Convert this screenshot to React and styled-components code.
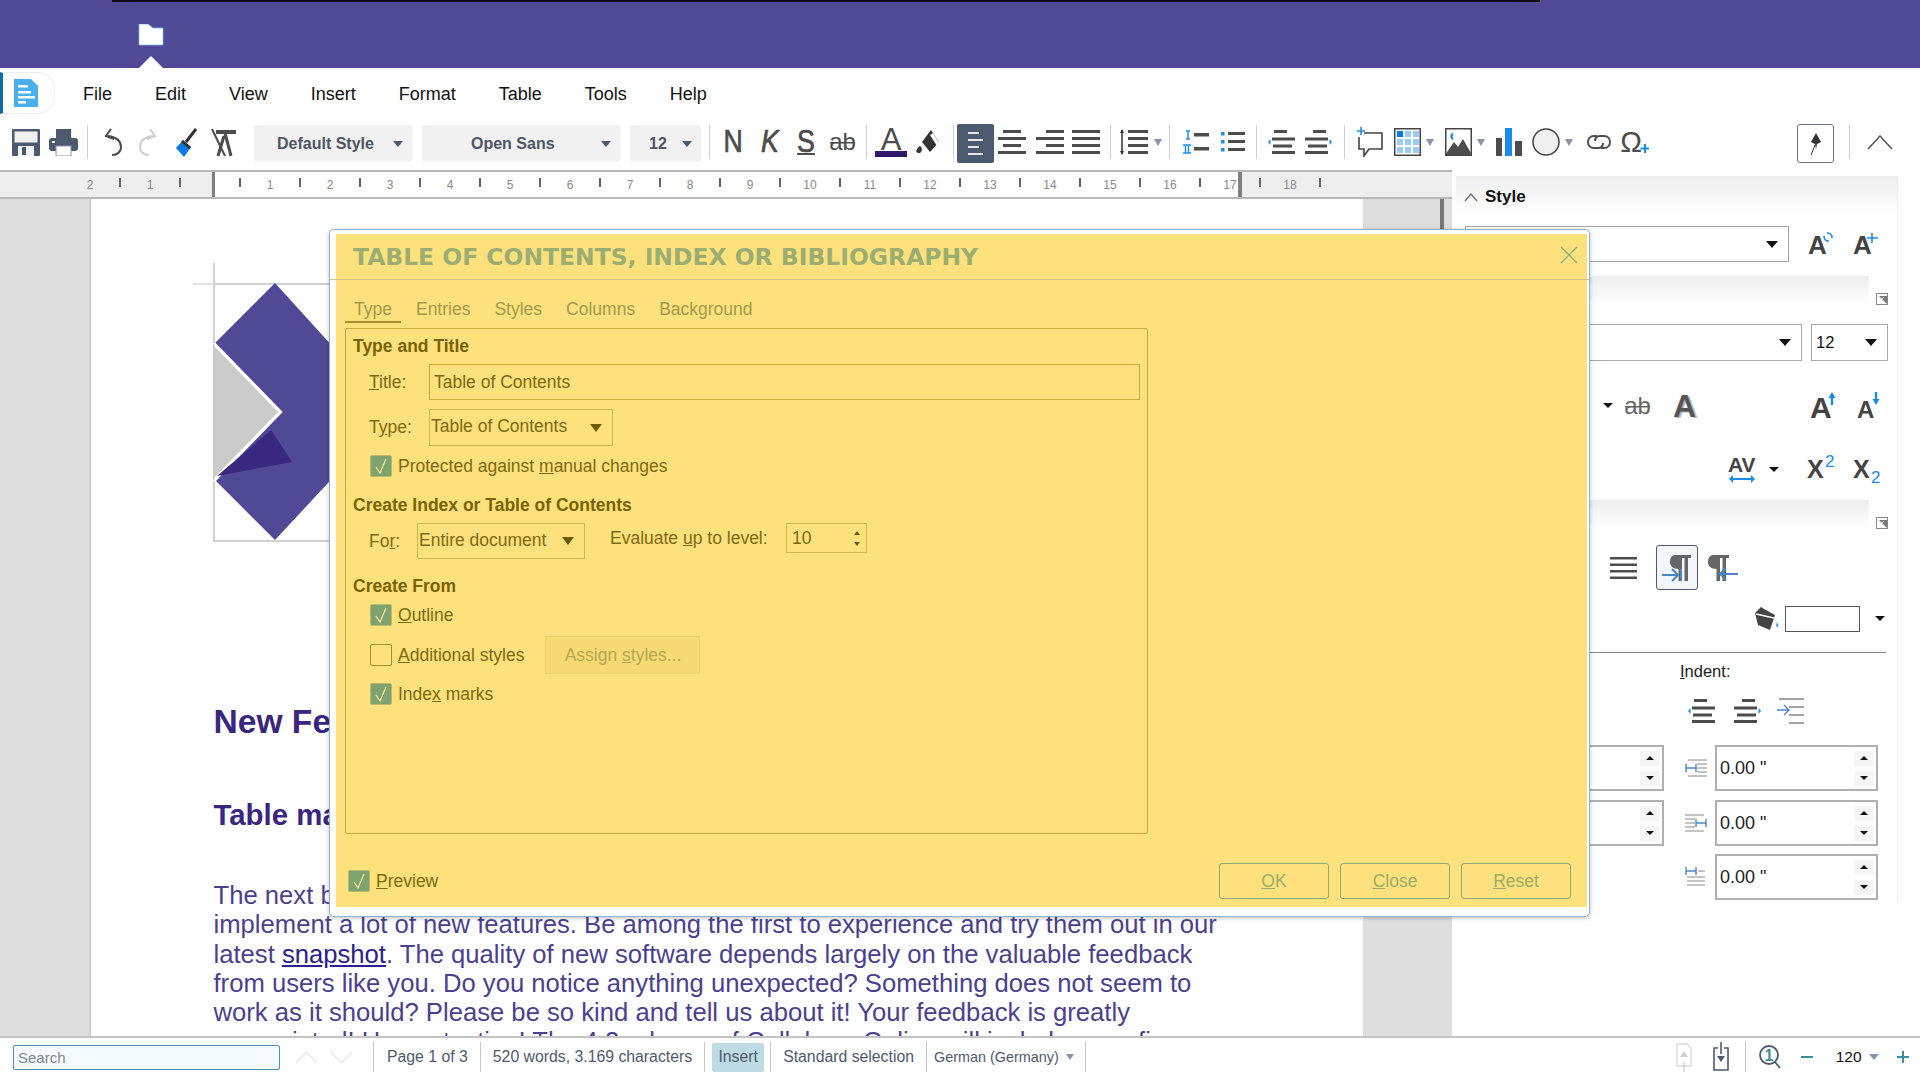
import React from "react";
import styled, { createGlobalStyle } from "styled-components";

const GlobalStyle = createGlobalStyle`
  html, body {
    margin: 0;
    padding: 0;
    background: #fff;
    overflow: hidden;
    font-family: "Liberation Sans", Arial, sans-serif;
  }
  * { box-sizing: border-box; }
`;

const DARK = "#4c4c4c";
const SLATE = "#4c5a70";
const BLUE = "#1b8be8";
const YELLOW_TEXT = "#7d6a10";

// --- page frame ---
const Shell = styled.div`
  width: 1920px;
  height: 1080px;
  display: flex;
  flex-direction: column;
  overflow: hidden;
`;

const TopBar = styled.header`
  height: 68px;
  background: #504a96;
  flex: none;
`;

const TopLine = styled.div`
  margin-left: 112px;
  width: 1428px;
  height: 2px;
  background: #111;
`;

const FolderTab = styled.div`
  margin-left: 138px;
  width: 26px;
  display: flex;
  flex-direction: column;
  padding-top: 22px;
`;

const Notch = styled.div`
  margin-top: 10px;
  width: 0;
  height: 0;
  border-left: 13px solid transparent;
  border-right: 13px solid transparent;
  border-bottom: 13px solid #fff;
`;

const MenuBar = styled.nav`
  height: 46px;
  flex: none;
  display: flex;
  align-items: flex-end;
`;

const DocTab = styled.div`
  width: 55px;
  height: 42px;
  border-left: 3px solid #0b6da8;
  border-top: 1px solid #eee;
  border-right: 1px solid #eee;
  border-bottom: 1px solid #eee;
  border-radius: 0 18px 18px 0;
  display: flex;
  align-items: center;
  padding-left: 11px;
`;

const MenuList = styled.div`
  display: flex;
  gap: 43px;
  margin-left: 28px;
  height: 46px;
  padding-top: 6px;
  align-items: center;
  font-size: 18px;
  color: #111;
`;

const Toolbar = styled.div`
  height: 56px;
  flex: none;
  display: flex;
  align-items: center;
  padding-left: 12px;
`;

const ToolSep = styled.span`
  flex: none;
  width: 1px;
  height: 34px;
  background: #cfcfcf;
  margin-left: ${(p) => p.$ml}px;
`;

const ComboTool = styled.div`
  flex: none;
  width: ${(p) => p.$w}px;
  height: 37px;
  margin-left: ${(p) => p.$ml}px;
  margin-top: 3px;
  background: #f1f1f1;
  border-radius: 3px;
  display: flex;
  align-items: center;
  justify-content: space-between;
  padding: 0 ${(p) => p.$pr}px 0 ${(p) => p.$pl}px;
  font-size: 16px;
  font-weight: 700;
  color: #4e5566;
`;

const Caret = styled.span`
  flex: none;
  display: inline-block;
  width: 0;
  height: 0;
  margin-left: ${(p) => p.$ml || 0}px;
  border-left: ${(p) => p.$s}px solid transparent;
  border-right: ${(p) => p.$s}px solid transparent;
  border-top: ${(p) => (p.$up ? 0 : p.$h || p.$s)}px solid ${(p) => p.$c};
  border-bottom: ${(p) => (p.$up ? p.$h || p.$s : 0)}px solid ${(p) => p.$c};
`;

const ActiveTool = styled.div`
  flex: none;
  width: 37px;
  height: 39px;
  margin-left: ${(p) => p.$ml}px;
  margin-top: 3px;
  background: ${SLATE};
  border-radius: 2px;
  display: flex;
  align-items: center;
  justify-content: center;
`;

const PinTool = styled.div`
  flex: none;
  width: 37px;
  height: 39px;
  margin-left: ${(p) => p.$ml}px;
  margin-top: 3px;
  border: 1px solid #6c7482;
  border-radius: 3px;
  display: flex;
  align-items: center;
  justify-content: center;
`;

const FormatLetter = styled.span`
  flex: none;
  width: ${(p) => p.$w}px;
  margin-left: ${(p) => p.$ml}px;
  height: 30px;
  line-height: 30px;
  text-align: center;
  font-size: 31px;
  font-style: ${(p) => (p.$italic ? "italic" : "normal")};
  text-decoration: ${(p) => (p.$under ? "underline" : "none")};
  text-decoration-thickness: 2px;
  text-underline-offset: 1px;
  color: ${DARK};
  -webkit-text-stroke: 0.7px ${DARK};
  transform: scaleX(0.86);
  overflow: visible;
`;

const IconSvg = styled.svg`
  display: block;
  flex: none;
  margin: ${(p) => -p.$b}px ${(p) => -p.$b}px ${(p) => -p.$b}px ${(p) => (p.$ml || 0) - p.$b}px;
`;

const GlyphText = styled.text`
  font-family: "Liberation Sans", Arial, sans-serif;
`;

// bleed leaves room round the drawing so a glyph in it isn't clipped by the svg box
const Icon = ({ w, h, ml, bleed = 0, children }) => (
  <IconSvg
    $ml={ml}
    $b={bleed}
    width={w + bleed * 2}
    height={h + bleed * 2}
    viewBox={`${-bleed} ${-bleed} ${w + bleed * 2} ${h + bleed * 2}`}
  >
    {children}
  </IconSvg>
);

// --- body ---
const Body = styled.div`
  flex: 1;
  display: flex;
  min-height: 0;
`;

const Workspace = styled.main`
  width: 1452px;
  flex: none;
  display: flex;
  flex-direction: column;
`;

const Ruler = styled.div`
  height: 29px;
  flex: none;
  width: 1452px;
  border-top: 2px solid #b8b8b8;
  border-bottom: 2px solid #b8b8b8;
  background: linear-gradient(
    to right,
    #eee 212px,
    #808080 212px,
    #808080 215px,
    #fff 215px,
    #fff 1238px,
    #808080 1238px,
    #808080 1242px,
    #eee 1242px
  );
  display: flex;
  align-items: center;
  padding-left: 75px;
`;

const RulerCell = styled.span`
  width: 30px;
  flex: none;
  display: flex;
  justify-content: center;
  font-size: 12px;
  color: #8a8a8a;
`;

const RulerTick = styled.span`
  width: 1.5px;
  height: 9px;
  margin-top: -4px;
  background: #666;
`;

const DocArea = styled.div`
  flex: 1;
  min-height: 0;
  display: flex;
  background: #dedede;
  padding-left: 91px;
  overflow: hidden;
`;

const Page = styled.article`
  width: 1272px;
  flex: none;
  background: #fff;
  padding: 64px 0 0 122.5px;
  box-shadow: -1px 0 2px rgba(0, 0, 0, 0.12);
`;

const LogoWrap = styled.div`
  margin-left: -21px;
`;

const H1 = styled.h1`
  margin: 160px 0 0;
  font-size: 33.6px;
  line-height: 37px;
  font-weight: 700;
  white-space: nowrap;
  color: #3a2680;
`;

const H2 = styled.h2`
  margin: 59px 0 0;
  font-size: 29.4px;
  line-height: 32px;
  font-weight: 700;
  white-space: nowrap;
  color: #3a2680;
`;

const Para = styled.p`
  margin: 50px 0 0;
  font-size: 25.65px;
  line-height: 29.3px;
  white-space: nowrap;
  color: #4c3f8f;
`;

const DocLink = styled.a`
  color: #2a2090;
  text-decoration: underline;
`;

const ScrollThumb = styled.div`
  width: 4px;
  height: 33px;
  margin-left: 77px;
  background: #777;
  flex: none;
`;

// --- sidebar ---
const Sidebar = styled.aside`
  width: 468px;
  flex: none;
  padding: 6px 0 0 4px;
`;

const SidePanel = styled.div`
  width: 442px;
  height: 724px;
  border-right: 1px solid #eee;
  display: flex;
  flex-direction: column;
`;

const DeckTitle = styled.div`
  height: 39px;
  flex: none;
  background: linear-gradient(#eee, #fff);
  display: flex;
  align-items: center;
  padding: 3px 0 0 8px;
  gap: 7px;
  font-size: 17px;
  font-weight: 700;
  color: #111;
`;

const DeckHead = styled.div`
  display: flex;
  flex: none;
  height: 29px;
  margin-top: ${(p) => p.$mt}px;
  align-items: flex-end;
`;

const DeckGrad = styled.div`
  width: 413px;
  height: 29px;
  background: linear-gradient(#eee, #fff);
`;

const SideRow = styled.div`
  display: flex;
  flex: none;
  align-items: center;
  height: ${(p) => p.$h}px;
  margin-top: ${(p) => p.$mt}px;
`;

const SideCombo = styled.div`
  flex: none;
  width: ${(p) => p.$w}px;
  height: ${(p) => p.$h}px;
  margin-left: ${(p) => p.$ml}px;
  border: 1.5px solid #a8a8a8;
  background: #fff;
  display: flex;
  align-items: center;
  justify-content: space-between;
  padding: 0 10px 0 4px;
  font-size: 16.5px;
  color: #111;
`;

const ToggleBtn = styled.div`
  flex: none;
  margin-left: ${(p) => p.$ml}px;
  width: 42px;
  height: 45px;
  border: 1.5px solid ${SLATE};
  border-radius: 3px;
  background: #f3f6fa;
  display: flex;
  align-items: center;
  justify-content: center;
`;

const ColorBox = styled.div`
  flex: none;
  width: 75px;
  height: 26px;
  margin-left: ${(p) => p.$ml}px;
  border: 1.5px solid #555;
`;

const SideRule = styled.div`
  flex: none;
  width: 430px;
  height: 1px;
  margin-top: 20px;
  background: #888;
`;

const IndentLabel = styled.div`
  flex: none;
  margin: 8px 0 0 224px;
  font-size: 16.5px;
  line-height: 20px;
  color: #222;
`;

const SpinBox = styled.div`
  flex: none;
  width: ${(p) => p.$w}px;
  height: 46px;
  margin-left: ${(p) => p.$ml}px;
  border: 2px solid #b0b0b0;
  background: #fff;
  display: flex;
  align-items: center;
  justify-content: space-between;
  padding: 0 2px 0 3px;
  font-size: 18px;
  color: #222;
`;

const SpinBtns = styled.div`
  display: flex;
  flex-direction: column;
  gap: 5px;
`;

const SpinBtn = styled.span`
  width: 20px;
  height: 15px;
  background: #f5f5f5;
  display: flex;
  align-items: center;
  justify-content: center;
`;

// --- status bar ---
const StatusBar = styled.footer`
  height: 44px;
  flex: none;
  border-top: 2px solid #c4c4c4;
  display: flex;
  align-items: center;
  padding: 0 0 4px 13px;
  font-size: 15.8px;
  color: #4e5a6e;
`;

const SearchBox = styled.div`
  width: 267px;
  height: 25px;
  border: 1px solid #4c93a8;
  border-radius: 2px;
  background: #f5fbfe;
  display: flex;
  align-items: center;
  padding-left: 4px;
  font-size: 15px;
  color: #808890;
`;

const StatusSep = styled.span`
  flex: none;
  width: 1px;
  height: 30px;
  background: #c8c8c8;
  margin-left: ${(p) => p.$ml}px;
`;

const StatusText = styled.span`
  flex: none;
  margin-left: ${(p) => p.$ml}px;
  font-size: ${(p) => p.$fs || 15.8}px;
  white-space: nowrap;
  color: ${(p) => p.$c || "inherit"};
`;

const InsertBadge = styled.span`
  flex: none;
  width: 52px;
  height: 29px;
  margin-left: ${(p) => p.$ml}px;
  background: #bedbe4;
  border-radius: 2px;
  display: flex;
  align-items: center;
  justify-content: center;
`;

// --- dialog, lies over the document ---
const Dialog = styled.section`
  position: absolute;
  left: 329px;
  top: 229px;
  width: 1261px;
  height: 688px;
  background: #fff;
  border: 1px solid #8fb3d3;
  border-radius: 5px;
  box-shadow: 0 1px 4px rgba(0, 0, 0, 0.25);
  padding: 4px 2px 9px 6px;
  z-index: 5;
`;

const DialogFill = styled.div`
  height: 100%;
  background: #fde17c;
  display: flex;
  flex-direction: column;
  font-size: 17.5px;
  color: ${YELLOW_TEXT};
`;

const DialogHead = styled.div`
  height: 45px;
  flex: none;
  display: flex;
  align-items: center;
  justify-content: space-between;
  padding: 0 9px 4px 17px;
`;

const DialogTitle = styled.h3`
  margin: 4px 0 0;
  font-family: "DejaVu Sans", sans-serif;
  font-size: 23.45px;
  font-weight: 700;
  color: #9cad72;
  text-transform: uppercase;
  white-space: nowrap;
`;

const DialogRule = styled.div`
  flex: none;
  height: 1px;
  margin: 0 -2px 0 -6px;
  background: #cfc388;
`;

const TabBar = styled.div`
  flex: none;
  display: flex;
  gap: 6px;
  margin: 19px 0 0 9px;
`;

const Tab = styled.div`
  height: 24px;
  padding: 0 9px;
  line-height: 21px;
  color: #a39a4c;
  border-bottom: 2px solid ${(p) => (p.$active ? "#a98f2f" : "transparent")};
`;

const TabPanel = styled.div`
  flex: none;
  width: 803px;
  height: 506px;
  margin: 5px 0 0 9px;
  border: 1.5px solid #c8aa3c;
  border-radius: 2px;
  padding: 7px 7px 0;
  display: flex;
  flex-direction: column;
`;

const GroupTitle = styled.div`
  flex: none;
  height: 20px;
  line-height: 20px;
  margin-top: ${(p) => p.$mt || 0}px;
  font-weight: 700;
  color: #7a6200;
`;

const FormRow = styled.div`
  flex: none;
  display: flex;
  align-items: ${(p) => p.$align || "center"};
  height: ${(p) => p.$h}px;
  margin-top: ${(p) => p.$mt}px;
  padding-left: ${(p) => p.$pl || 16}px;
`;

const FieldLabel = styled.label`
  flex: none;
  width: ${(p) => p.$w}px;
  line-height: ${(p) => p.$lh || "normal"};
`;

const TextField = styled.div`
  flex: none;
  width: ${(p) => p.$w}px;
  height: 100%;
  border: 1.5px solid #c8aa3c;
  padding-left: 4px;
  display: flex;
  align-items: center;
`;

const SelectField = styled.div`
  flex: none;
  width: ${(p) => p.$w}px;
  height: 100%;
  border: 1.5px solid #d1b650;
  padding: 0 10px 0 1px;
  display: flex;
  align-items: center;
  justify-content: space-between;
`;

const SelectText = styled.span`
  margin-top: -2px;
`;

const LevelLabel = styled.span`
  flex: none;
  margin-left: 25px;
  width: 176px;
  line-height: 30px;
`;

const LevelSpin = styled.div`
  flex: none;
  width: 81px;
  height: 30px;
  border: 1.5px solid #d1b650;
  padding: 0 6px 0 5px;
  display: flex;
  align-items: center;
  justify-content: space-between;
`;

const LevelArrows = styled.div`
  display: flex;
  flex-direction: column;
  gap: 7px;
`;

const CheckBox = styled.span`
  flex: none;
  width: 22px;
  height: 22px;
  border: 1px solid ${(p) => (p.$on ? "#b9bb6a" : "#a68f2c")};
  border-radius: 2px;
  background: ${(p) => (p.$on ? "#7fa36e" : "transparent")};
  display: flex;
  align-items: center;
  justify-content: center;
`;

const CheckText = styled.span`
  flex: none;
  margin-left: 6px;
`;

const AssignBtn = styled.div`
  flex: none;
  width: 155px;
  height: 38px;
  margin-left: 21px;
  background: #f6da74;
  border: 1.5px solid #ecd36d;
  display: flex;
  align-items: center;
  justify-content: center;
  color: #b9a84e;
`;

const DialogFoot = styled.div`
  flex: none;
  display: flex;
  align-items: center;
  height: 36px;
  margin-top: 29px;
  padding: 0 16px 0 12px;
`;

const FootBtns = styled.div`
  display: flex;
  gap: 11px;
  margin-left: auto;
`;

const FootBtn = styled.div`
  width: 110px;
  height: 36px;
  border: 1.5px solid #8aaa7c;
  border-radius: 3px;
  display: flex;
  align-items: center;
  justify-content: center;
  color: #9dac6a;
`;

const Tick = () => (
  <Icon w={14} h={18}>
    <path d="M2 10l4 6 6-14" fill="none" stroke="#fde9a0" strokeWidth="1.2" />
  </Icon>
);

const Check = ({ on = true }) => <CheckBox $on={on}>{on && <Tick />}</CheckBox>;

// --- toolbar drawings ---
const SaveIcon = () => (
  <Icon w={28} h={28}>
    <rect x="0" y="1" width="28" height="27" rx="1" fill={SLATE} />
    <rect x="2.5" y="3.5" width="23" height="11" fill="#f1f1f1" />
    <rect x="6" y="18" width="16" height="10" fill="#f4f4f4" />
    <rect x="10" y="19" width="4" height="8" fill={SLATE} />
  </Icon>
);

const PrintIcon = () => (
  <Icon w={29} h={28} ml={9}>
    <rect x="7" y="1" width="15" height="9" fill={SLATE} />
    <rect x="0" y="10" width="29" height="13" rx="3" fill={SLATE} />
    <rect x="7" y="18" width="15" height="10" fill="#fff" stroke="#8a93a3" />
    <rect x="3" y="13" width="3" height="2" fill="#fff" />
  </Icon>
);

const UndoIcon = ({ ml, c = DARK, flip }) => (
  <Icon w={20} h={28} ml={ml}>
    <g transform={flip ? "translate(20,0) scale(-1,1)" : undefined}>
      <path d="M5 8C13 9 18 13 18 19C18 24 14 27 9 27" fill="none" stroke={c} strokeWidth="2" />
      <path d="M8 1L3 8L11 11" fill="none" stroke={c} strokeWidth="2" />
    </g>
  </Icon>
);

const BrushIcon = () => (
  <Icon w={22} h={29} ml={18}>
    <path d="M20 1L10 14" stroke="#333" strokeWidth="3" />
    <path d="M7 12L15 19L8 29L0 20Z" fill="#0b7ade" />
    <path d="M7 12L15 19L13 21L5 14Z" fill="#333" />
  </Icon>
);

const ClearIcon = () => (
  <Icon w={25} h={29} ml={13}>
    <rect x="5" y="2" width="20" height="4" fill={DARK} />
    <path d="M14 5L20 28" stroke={DARK} strokeWidth="3" fill="none" />
    <path d="M1 1L14 28" stroke={DARK} strokeWidth="2" fill="none" />
    <path d="M13 8L7 28" stroke={DARK} strokeWidth="3" fill="none" />
  </Icon>
);

const StrikeIcon = ({ w = 25, ml, size = 24, c = DARK }) => (
  <Icon w={w} h={22} ml={ml} bleed={8}>
    <GlyphText x={w / 2} y="19" textAnchor="middle" fontSize={size} fill={c}>
      ab
    </GlyphText>
    <rect x="0" y="11" width={w} height="1.5" fill={c} />
  </Icon>
);

const FontColorIcon = () => (
  <Icon w={32} h={30} ml={8} bleed={8}>
    <GlyphText x="16" y="23" textAnchor="middle" fontSize="31" fill={DARK}>
      A
    </GlyphText>
    <rect x="0" y="24" width="32" height="6" fill="#32186e" />
  </Icon>
);

const HighlightIcon = () => (
  <Icon w={26} h={24} ml={8}>
    <path d="M16 0L24 12L15 22L7 12Z" fill="#333" />
    <path d="M5 16C9 19 6 24 3 23C0 22 1 19 5 16Z" fill="#333" />
    <path d="M18 3L25 14L22 16L15 5Z" fill="#fff" />
  </Icon>
);

const rowsFor = {
  left: [[0, 11], [0, 15], [0, 11], [0, 15]],
  center: [[5, 23], [0, 28], [5, 23], [0, 28]],
  right: [[10, 28], [0, 28], [10, 28], [0, 28]],
  full: [[0, 28], [0, 28], [0, 28], [0, 28]],
};

const AlignIcon = ({ kind, ml, c = DARK, w = 28, thick = 3, step = 7 }) => (
  <Icon w={w} h={step * 3 + thick + 1} ml={ml}>
    {rowsFor[kind].map(([a, b], i) => (
      <rect key={i} x={a} y={i * step} width={Math.min(b, w) - a} height={thick} fill={c} />
    ))}
  </Icon>
);

const LineSpacingIcon = () => (
  <Icon w={28} h={30} ml={9}>
    <path d="M2 3V27" stroke="#333" strokeWidth="1.5" />
    <path d="M0 6L2 2L4 6ZM0 24L2 28L4 24Z" fill="#333" />
    {[3, 10, 17, 24].map((y) => (
      <rect key={y} x="8" y={y} width="20" height="3" fill={DARK} />
    ))}
  </Icon>
);

const NumberingIcon = () => (
  <Icon w={26} h={26} ml={13}>
    <path d="M3 2H7M5 2V10M3 10H7" stroke={BLUE} strokeWidth="1.4" fill="none" />
    <path d="M0 16H8M0 24H8M2.5 16V24M5.5 16V24" stroke={BLUE} strokeWidth="1.4" fill="none" />
    <rect x="11" y="4" width="15" height="3.5" fill={DARK} />
    <rect x="11" y="18" width="15" height="3.5" fill={DARK} />
  </Icon>
);

const BulletsIcon = () => (
  <Icon w={24} h={24} ml={12}>
    {[2, 10, 18].map((y) => (
      <g key={y}>
        <rect x="0" y={y} width="3.5" height="3.5" fill={BLUE} />
        <rect x="7" y={y} width="17" height="3" fill={DARK} />
      </g>
    ))}
  </Icon>
);

const IndentIcon = ({ ml, flip, w = 27, c = DARK, h = 26 }) => (
  <Icon w={w} h={h} ml={ml}>
    <g transform={flip ? `translate(${w},0) scale(-1,1)` : undefined}>
      <path d={`M0 ${h / 2}l2.5-3v6z`} fill={BLUE} />
      <rect x="6" y="1" width="13" height="3" fill={c} />
      <rect x="4" y={h / 2 - 4.5} width={w - 4} height="3" fill={c} />
      <rect x="5" y={h / 2 + 2.5} width={w - 8} height="3" fill={c} />
      <rect x="4" y={h - 4} width={w - 4} height="3" fill={c} />
    </g>
  </Icon>
);

const CommentIcon = () => (
  <Icon w={26} h={30} ml={12}>
    <path d="M7 6H25V22H12L7 29V22H2V10" fill="none" stroke="#444" strokeWidth="1.6" />
    <path d="M4 0V8M0 4H8" stroke={BLUE} strokeWidth="1.6" />
  </Icon>
);

const TableIcon = () => (
  <Icon w={27} h={28} ml={11}>
    <rect x="0.75" y="0.75" width="25.5" height="26.5" fill="#fff" stroke="#444" strokeWidth="1.5" />
    {[3, 11, 19].map((y) =>
      [3, 11, 19].map((x) => (
        <rect key={`${x}-${y}`} x={x} y={y} width="6" height="6" fill={x === 3 && y === 3 ? "#0b7ade" : "#9ccbf3"} />
      ))
    )}
  </Icon>
);

const ImageIcon = () => (
  <Icon w={27} h={28} ml={11}>
    <rect x="0.75" y="0.75" width="25.5" height="26.5" fill="#fff" stroke="#444" strokeWidth="1.5" />
    <path d="M0 27L9 14L13 19L18 11L27 27Z" fill={DARK} />
    <path d="M8 5C5 6 5 10 8 12C7 10 7 7 8 5Z" fill={BLUE} stroke={BLUE} />
  </Icon>
);

const ChartIcon = () => (
  <Icon w={26} h={28} ml={11}>
    <rect x="0" y="10" width="6" height="18" fill={DARK} />
    <rect x="9" y="0" width="7" height="28" fill={BLUE} />
    <rect x="19" y="13" width="7" height="15" fill={DARK} />
  </Icon>
);

const ShapeIcon = () => (
  <Icon w={28} h={28} ml={10}>
    <circle cx="14" cy="14" r="13" fill="#f0f0f0" stroke="#444" strokeWidth="1.5" />
  </Icon>
);

const LinkIcon = () => (
  <Icon w={24} h={18} ml={14}>
    <path d="M10 3H7C3 3 1 6 1 9C1 12 3 15 7 15H11C15 15 16 12 16 10" fill="none" stroke={DARK} strokeWidth="2" />
    <path d="M14 15H17C21 15 23 12 23 9C23 6 21 3 17 3H13C9 3 8 6 8 8" fill="none" stroke={DARK} strokeWidth="2" />
  </Icon>
);

const OmegaIcon = () => (
  <Icon w={30} h={26} ml={8} bleed={8}>
    <GlyphText x="12" y="23" textAnchor="middle" fontSize="29" fill={DARK}>
      Ω
    </GlyphText>
    <path d="M26 15V24M21.500 19.500H30" stroke={BLUE} strokeWidth="2" />
  </Icon>
);

const PinIcon = () => (
  <Icon w={14} h={26}>
    <path d="M7 2L12 11L8 13L7 18L6 13L2 11Z" fill="#333" />
    <path d="M2 24L6 14" stroke="#333" strokeWidth="1" />
  </Icon>
);

const Chevron = ({ w, h, ml, c = "#555", dir = "up", sw = 1.5 }) => (
  <Icon w={w} h={h} ml={ml}>
    <path
      d={dir === "up" ? `M1 ${h - 1}L${w / 2} 1L${w - 1} ${h - 1}` : `M1 1L${w / 2} ${h - 1}L${w - 1} 1`}
      fill="none"
      stroke={c}
      strokeWidth={sw}
    />
  </Icon>
);

// --- sidebar drawings ---
const BigA = ({ w, ml, children, size = 26, h = 24, base = 22 }) => (
  <Icon w={w} h={h} ml={ml} bleed={8}>
    <GlyphText x="0" y={base} fontSize={size} fontWeight="700" fill="#444">
      A
    </GlyphText>
    {children}
  </Icon>
);

const XScript = ({ ml, sup }) => (
  <Icon w={28} h={28} ml={ml} bleed={8}>
    <GlyphText x="0" y="23" fontSize="25" fontWeight="700" fill="#444">
      X
    </GlyphText>
    <GlyphText x="18" y={sup ? 12 : 28} fontSize="17" fill={BLUE}>
      2
    </GlyphText>
  </Icon>
);

const MoreIcon = () => (
  <Icon w={12} h={12} ml={7}>
    <rect x="0.5" y="0.5" width="11" height="11" fill="#fff" stroke="#888" />
    <path d="M3 3L11 3L11 11Z" fill="#777" />
    <path d="M3 9L8 4" stroke="#fff" strokeWidth="1" />
  </Icon>
);

const PilcrowIcon = ({ ml, arrow }) => (
  <Icon w={30} h={28} ml={ml}>
    {arrow === "in" ? (
      <g>
        <path d="M13 1H29V4H26V27H22.500V4H20V27H16.500V15C11 15 8 12 8 8C8 4 10 1 13 1Z" fill="#666" />
        <path d="M0 21H16M10 15L16 21L10 27M19 15V27" fill="none" stroke="#4a86c5" strokeWidth="2" />
      </g>
    ) : (
      <g>
        <path d="M5 1H21V4H18V27H14.500V4H12V27H8.500V15C3 15 0 12 0 8C0 4 2 1 5 1Z" fill="#666" />
        <path d="M30 20H12M18 14L12 20L18 26" fill="none" stroke="#4a86c5" strokeWidth="2" />
      </g>
    )}
  </Icon>
);

const BucketIcon = () => (
  <Icon w={25} h={24}>
    <path d="M1 6L7 0L10 2L21 8L16 23L4 18Z" fill="#444" />
    <path d="M2 7L20 11" stroke="#fff" strokeWidth="1.4" />
    <path d="M23 15C22 18 22 20 23.500 20C25 20 24 18 23 15Z" fill={BLUE} />
  </Icon>
);

const HangIndentIcon = ({ ml }) => (
  <Icon w={27} h={26} ml={ml}>
    <path d="M2 1H27M12 9H27M12 17H27M12 25H27" stroke="#888" strokeWidth="1.3" />
    <path d="M0 12H12M7 7L12 12L7 17" fill="none" stroke="#4a86c5" strokeWidth="1.3" />
  </Icon>
);

const SpacingIcon = ({ kind, ml }) => (
  <Icon w={22} h={20} ml={ml}>
    {kind === "before" && (
      <g>
        <path d="M3 2H22M12 10H22M3 18H22M12 6H22M12 14H22" stroke="#888" strokeWidth="1" />
        <path d="M1 6V14M11 6V14M1 10H11" stroke="#4a86c5" strokeWidth="1.4" />
      </g>
    )}
    {kind === "after" && (
      <g>
        <path d="M0 2H19M0 6H10M0 10H10M0 14H10M0 18H19" stroke="#888" strokeWidth="1" />
        <path d="M11 6V14M21 6V14M11 10H21" stroke="#4a86c5" strokeWidth="1.4" />
      </g>
    )}
    {kind === "first" && (
      <g>
        <path d="M13 4H20M2 10H20M2 14H20M2 18H20" stroke="#888" strokeWidth="1" />
        <path d="M1 0V8M11 0V8M1 4H11" stroke="#4a86c5" strokeWidth="1.4" />
      </g>
    )}
  </Icon>
);

const Spin = ({ w, ml, value }) => (
  <SpinBox $w={w} $ml={ml}>
    <span>{value}</span>
    <SpinBtns>
      <SpinBtn>
        <Caret $up $s={4.5} $h={4} $c="#111" />
      </SpinBtn>
      <SpinBtn>
        <Caret $s={4.5} $h={4} $c="#111" />
      </SpinBtn>
    </SpinBtns>
  </SpinBox>
);

const rulerCells = [];
for (let n = -2; n <= 18; n++) {
  rulerCells.push(n === 0 ? "" : Math.abs(n));
  if (n < 18) rulerCells.push("|");
}

export default function App() {
  return (
    <Shell>
      <GlobalStyle />
      <TopBar>
        <TopLine />
        <FolderTab>
          <Icon w={26} h={22}>
            <path d="M1 0H10L15 4H25V21H1Z" fill="#fff" stroke="#7fb6e6" strokeWidth="0.8" />
          </Icon>
          <Notch />
        </FolderTab>
      </TopBar>

      <MenuBar>
        <DocTab>
          <Icon w={24} h={28}>
            <path d="M0 0H17L24 7V28H0Z" fill="#4aaeef" />
            <rect x="4" y="6" width="10" height="2.5" fill="#fff" />
            <rect x="4" y="12" width="13" height="2.5" fill="#fff" />
            <rect x="4" y="17" width="17" height="2.5" fill="#fff" />
            <rect x="4" y="22" width="8" height="2.5" fill="#fff" />
          </Icon>
        </DocTab>
        <MenuList>
          {["File", "Edit", "View", "Insert", "Format", "Table", "Tools", "Help"].map((m) => (
            <span key={m}>{m}</span>
          ))}
        </MenuList>
      </MenuBar>

      <Toolbar>
        <SaveIcon />
        <PrintIcon />
        <ToolSep $ml={9} />
        <UndoIcon ml={15} />
        <UndoIcon ml={15} c="#cfcfcf" flip />
        <BrushIcon />
        <ClearIcon />
        <ComboTool $w={158} $ml={18} $pl={23} $pr={9}>
          Default Style <Caret $s={5} $h={6} $c={SLATE} />
        </ComboTool>
        <ComboTool $w={198} $ml={10} $pl={49} $pr={9}>
          Open Sans <Caret $s={5} $h={6} $c={SLATE} />
        </ComboTool>
        <ComboTool $w={71} $ml={10} $pl={19} $pr={9}>
          12 <Caret $s={5} $h={6} $c={SLATE} />
        </ComboTool>
        <ToolSep $ml={8} />
        <FormatLetter $w={22} $ml={12}>
          N
        </FormatLetter>
        <FormatLetter $w={22} $ml={15} $italic>
          K
        </FormatLetter>
        <FormatLetter $w={16} $ml={15} $under>
          S
        </FormatLetter>
        <StrikeIcon ml={18} />
        <ToolSep $ml={11} />
        <FontColorIcon />
        <HighlightIcon />
        <ToolSep $ml={12} />
        <ActiveTool $ml={3}>
          <AlignIcon kind="left" w={15} c="#e8e8e8" thick={2} step={7} />
        </ActiveTool>
        <AlignIcon kind="center" ml={4} />
        <AlignIcon kind="right" ml={10} />
        <AlignIcon kind="full" ml={8} />
        <ToolSep $ml={10} />
        <LineSpacingIcon />
        <Caret $ml={6} $s={4} $h={7} $c="#8a93a3" />
        <ToolSep $ml={7} />
        <NumberingIcon />
        <BulletsIcon />
        <ToolSep $ml={11} />
        <IndentIcon ml={11} />
        <IndentIcon ml={10} flip />
        <ToolSep $ml={12} />
        <CommentIcon />
        <TableIcon />
        <Caret $ml={5} $s={4} $h={7} $c="#8a93a3" />
        <ImageIcon />
        <Caret $ml={5} $s={4} $h={7} $c="#8a93a3" />
        <ChartIcon />
        <ShapeIcon />
        <Caret $ml={5} $s={4} $h={7} $c="#8a93a3" />
        <LinkIcon />
        <OmegaIcon />
        <PinTool $ml={148}>
          <PinIcon />
        </PinTool>
        <ToolSep $ml={15} />
        <Chevron w={26} h={15} ml={17} />
      </Toolbar>

      <Body>
        <Workspace>
          <Ruler>
            {rulerCells.map((c, i) => (
              <RulerCell key={i}>{c === "|" ? <RulerTick /> : c}</RulerCell>
            ))}
            <RulerCell>
              <RulerTick />
            </RulerCell>
          </Ruler>
          <DocArea>
            <Page>
              <LogoWrap>
                <Icon w={400} h={280}>
                  <path d="M21 21H350M21 0V278H350" fill="none" stroke="#cfcfcf" strokeWidth="2" />
                  <path d="M0 21H21" stroke="#e2e2e2" strokeWidth="2" />
                  <path d="M82 20L200 150L82 277L23 218L88 149L22 80Z" fill="#504a96" />
                  <path d="M21 83L85 149L21 215Z" fill="#cbcbcb" />
                  <path d="M21 80L88 149L21 218" fill="none" stroke="#fff" strokeWidth="2.5" />
                  <path d="M24 213L78 167L99 199Z" fill="#392880" />
                </Icon>
              </LogoWrap>
              <H1>New Features</H1>
              <H2>Table management</H2>
              <Para>
                The next big release will bring many changes and
                <br />
                implement a lot of new features. Be among the first to experience and try them out in our
                <br />
                latest <DocLink>snapshot</DocLink>. The quality of new software depends largely on the valuable feedback
                <br />
                from users like you. Do you notice anything unexpected? Something does not seem to
                <br />
                work as it should? Please be so kind and tell us about it! Your feedback is greatly
                <br />
                appreciated! Happy testing! The 4.2 release of Collabora Online will include a confi
              </Para>
            </Page>
            <ScrollThumb />
          </DocArea>
        </Workspace>

        <Sidebar>
          <SidePanel>
            <DeckTitle>
              <Chevron w={14} h={9} c="#777" />
              Style
            </DeckTitle>
            <SideRow $h={36} $mt={11}>
              <SideCombo $w={324} $h={36} $ml={9}>
                <span />
                <Caret $s={6} $h={7} $c="#111" />
              </SideCombo>
              <BigA w={26} ml={19}>
                <path d="M21 9A4.500 4.500 0 0 1 16 4M19 1A4.500 4.500 0 0 1 24 6" fill="none" stroke={BLUE} strokeWidth="1.6" />
              </BigA>
              <BigA w={26} ml={19}>
                <path d="M19 1V11M14 6H25" stroke={BLUE} strokeWidth="1.6" />
              </BigA>
            </SideRow>
            <DeckHead $mt={14}>
              <DeckGrad />
              <MoreIcon />
            </DeckHead>
            <SideRow $h={37} $mt={19}>
              <SideCombo $w={337} $h={37} $ml={9}>
                <span />
                <Caret $s={6} $h={7} $c="#111" />
              </SideCombo>
              <SideCombo $w={77} $h={37} $ml={9}>
                12
                <Caret $s={6} $h={7} $c="#111" />
              </SideCombo>
            </SideRow>
            <SideRow $h={27} $mt={31}>
              <Caret $ml={147} $s={5} $h={5} $c="#111" />
              <StrikeIcon ml={12} c="#666" />
              <Icon w={26} h={27} ml={23} bleed={8}>
                <GlyphText x="2" y="26" fontSize="32" fontWeight="700" fill="#bbb">
                  A
                </GlyphText>
                <GlyphText x="0" y="25" fontSize="32" fontWeight="700" fill="#555">
                  A
                </GlyphText>
              </Icon>
              <BigA w={26} ml={111} size={30} h={27} base={26}>
                <path d="M22 2V13" stroke={BLUE} strokeWidth="2.4" />
                <path d="M18.500 6L22 0L25.500 6Z" fill={BLUE} />
              </BigA>
              <Icon w={24} h={28} ml={21} bleed={8}>
                <GlyphText x="0" y="26" fontSize="24" fontWeight="700" fill="#444">
                  A
                </GlyphText>
                <path d="M19 0V9" stroke={BLUE} strokeWidth="2.4" />
                <path d="M15.500 7L19 13L22.500 7Z" fill={BLUE} />
              </Icon>
            </SideRow>
            <SideRow $h={28} $mt={36}>
              <Icon w={28} h={28} ml={272} bleed={8}>
                <GlyphText x="0" y="17" fontSize="21" fontWeight="700" fill="#444">
                  AV
                </GlyphText>
                <path d="M3 24H25" stroke={BLUE} strokeWidth="2" />
                <path d="M5 20L1 24L5 28ZM23 20L27 24L23 28Z" fill={BLUE} />
              </Icon>
              <Caret $ml={13} $s={5} $h={5} $c="#111" />
              <XScript ml={28} sup />
              <XScript ml={18} />
            </SideRow>
            <DeckHead $mt={17}>
              <DeckGrad />
              <MoreIcon />
            </DeckHead>
            <SideRow $h={45} $mt={16}>
              <Icon w={27} h={22} ml={154}>
                {[0, 6.500, 13, 19.500].map((y) => (
                  <rect key={y} x="0" y={y} width="27" height="2.500" fill={DARK} />
                ))}
              </Icon>
              <ToggleBtn $ml={19}>
                <PilcrowIcon arrow="in" />
              </ToggleBtn>
              <PilcrowIcon ml={10} arrow="out" />
            </SideRow>
            <SideRow $h={27} $mt={15}>
              <Icon w={1} h={1} ml={297} />
              <BucketIcon />
              <ColorBox $ml={6} />
              <Caret $ml={15} $s={5} $h={5} $c="#111" />
            </SideRow>
            <SideRule />
            <IndentLabel>
              <u>I</u>ndent:
            </IndentLabel>
            <SideRow $h={26} $mt={17}>
              <IndentIcon ml={232} />
              <IndentIcon ml={19} flip />
              <HangIndentIcon ml={16} />
            </SideRow>
            <SideRow $h={46} $mt={21}>
              <Spin w={199} ml={9} value="" />
              <SpacingIcon kind="before" ml={21} />
              <Spin w={163} ml={8} value={'0.00 "'} />
            </SideRow>
            <SideRow $h={46} $mt={9}>
              <Spin w={199} ml={9} value="" />
              <SpacingIcon kind="after" ml={21} />
              <Spin w={163} ml={8} value={'0.00 "'} />
            </SideRow>
            <SideRow $h={46} $mt={8}>
              <SpacingIcon kind="first" ml={229} />
              <Spin w={163} ml={8} value={'0.00 "'} />
            </SideRow>
          </SidePanel>
        </Sidebar>
      </Body>

      <StatusBar>
        <SearchBox>Search</SearchBox>
        <Chevron w={23} h={13} ml={15} c="#d8d8d8" sw={1} />
        <Chevron w={23} h={13} ml={12} c="#d8d8d8" dir="down" sw={1} />
        <StatusSep $ml={20} />
        <StatusText $ml={13}>Page 1 of 3</StatusText>
        <StatusSep $ml={12} />
        <StatusText $ml={12}>520 words, 3.169 characters</StatusText>
        <StatusSep $ml={12} />
        <InsertBadge $ml={7}>Insert</InsertBadge>
        <StatusSep $ml={6} />
        <StatusText $ml={12}>Standard selection</StatusText>
        <StatusSep $ml={12} />
        <StatusText $ml={7} $fs={14.4}>
          German (Germany)
        </StatusText>
        <Caret $ml={7} $s={4} $h={6} $c="#8a93a3" />
        <StatusSep $ml={11} />
        <Icon w={16} h={30} ml={590}>
          <path d="M1 2H11L15 6V24H1Z" fill="none" stroke="#d8dade" strokeWidth="1.4" />
          <path d="M8 9L12 15H4Z" fill="#d0d2d6" />
          <path d="M8 20V30" stroke="#d0d2d6" strokeWidth="1.4" />
        </Icon>
        <Icon w={16} h={30} ml={21}>
          <path d="M5 6H1V28H15V6H11" fill="none" stroke={SLATE} strokeWidth="1.6" />
          <path d="M8 0V12" stroke={SLATE} strokeWidth="1.6" />
          <path d="M4 14H12L8 20Z" fill={SLATE} />
        </Icon>
        <StatusSep $ml={16} />
        <Icon w={22} h={28} ml={13} bleed={6}>
          <circle cx="10" cy="12" r="9" fill="none" stroke={SLATE} strokeWidth="1.8" />
          <path d="M16 19L21 25" stroke={SLATE} strokeWidth="1.8" />
          <GlyphText x="10" y="18" textAnchor="middle" fontSize="16" fontWeight="700" fill="#3f8ca0">
            1
          </GlyphText>
        </Icon>
        <Icon w={12} h={12} ml={20}>
          <rect x="0" y="5" width="12" height="2" fill="#3f8ca0" />
        </Icon>
        <StatusText $ml={23} $fs={15.500} $c="#111">
          120
        </StatusText>
        <Caret $ml={7} $s={5} $h={6} $c="#8a93a3" />
        <Icon w={12} h={12} ml={18}>
          <path d="M0 6H12M6 0V12" stroke="#3f8ca0" strokeWidth="2" />
        </Icon>
      </StatusBar>

      <Dialog>
        <DialogFill>
          <DialogHead>
            <DialogTitle>Table of Contents, Index or Bibliography</DialogTitle>
            <Icon w={18} h={18}>
              <path d="M1 1L17 17M17 1L1 17" stroke="#8aaf80" strokeWidth="1.3" />
            </Icon>
          </DialogHead>
          <DialogRule />
          <TabBar>
            <Tab $active>Type</Tab>
            <Tab>Entries</Tab>
            <Tab>Styles</Tab>
            <Tab>Columns</Tab>
            <Tab>Background</Tab>
          </TabBar>
          <TabPanel>
            <GroupTitle>Type and Title</GroupTitle>
            <FormRow $h={36} $mt={8}>
              <FieldLabel $w={60}>
                <u>T</u>itle:
              </FieldLabel>
              <TextField $w={711}>Table of Contents</TextField>
            </FormRow>
            <FormRow $h={37} $mt={9}>
              <FieldLabel $w={60}>
                T<u>y</u>pe:
              </FieldLabel>
              <SelectField $w={184}>
                <SelectText>Table of Contents</SelectText>
                <Caret $s={6} $h={8} $c="#6b5a00" />
              </SelectField>
            </FormRow>
            <FormRow $h={22} $mt={9} $pl={17}>
              <Check />
              <CheckText>
                Protected against <u>m</u>anual changes
              </CheckText>
            </FormRow>
            <GroupTitle $mt={18}>Create Index or Table of Contents</GroupTitle>
            <FormRow $h={36} $mt={8} $align="flex-start">
              <FieldLabel $w={48} $lh="36px">
                Fo<u>r</u>:
              </FieldLabel>
              <SelectField $w={168}>
                <SelectText>Entire document</SelectText>
                <Caret $s={6} $h={8} $c="#6b5a00" />
              </SelectField>
              <LevelLabel>
                Evaluate <u>u</u>p to level:
              </LevelLabel>
              <LevelSpin>
                10
                <LevelArrows>
                  <Caret $up $s={3.500} $h={4} $c="#6b5a00" />
                  <Caret $s={3.500} $h={4} $c="#6b5a00" />
                </LevelArrows>
              </LevelSpin>
            </FormRow>
            <GroupTitle $mt={17}>Create From</GroupTitle>
            <FormRow $h={22} $mt={8} $pl={17}>
              <Check />
              <CheckText>
                <u>O</u>utline
              </CheckText>
            </FormRow>
            <FormRow $h={38} $mt={10} $pl={17}>
              <Check on={false} />
              <CheckText>
                <u>A</u>dditional styles
              </CheckText>
              <AssignBtn>
                <span>
                  Assign <u>s</u>tyles...
                </span>
              </AssignBtn>
            </FormRow>
            <FormRow $h={22} $mt={9} $pl={17}>
              <Check />
              <CheckText>
                Inde<u>x</u> marks
              </CheckText>
            </FormRow>
          </TabPanel>
          <DialogFoot>
            <Check />
            <CheckText>
              <u>P</u>review
            </CheckText>
            <FootBtns>
              <FootBtn>
                <span>
                  <u>O</u>K
                </span>
              </FootBtn>
              <FootBtn>
                <span>
                  <u>C</u>lose
                </span>
              </FootBtn>
              <FootBtn>
                <span>
                  <u>R</u>eset
                </span>
              </FootBtn>
            </FootBtns>
          </DialogFoot>
        </DialogFill>
      </Dialog>
    </Shell>
  );
}
